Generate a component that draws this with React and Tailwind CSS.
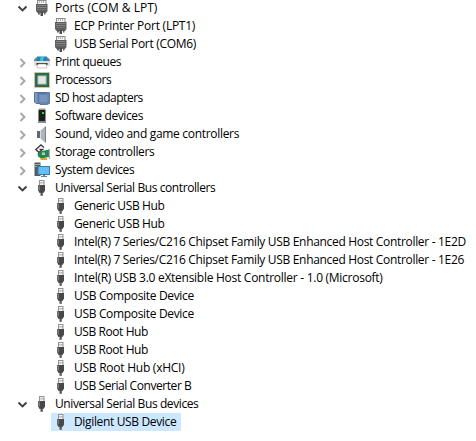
function PortIcon() {
  return (
    <svg className="h-[18px] w-4 shrink-0" viewBox="0 0 16 18">
      <rect x="3.500" y="1.500" width="8.500" height="4" fill="#f4f4f4" stroke="#8c8c8c" />
      <path d="M5.500 2v2M7.500 2v2M9.500 2v2" stroke="#b5b5b5" />
      <path d="M2 5h11.500v7l-1.500 2H3.500L2 12z" fill="#5f5f5f" />
      <path d="M3 6.500h9.500M3 8.500h9.500" stroke="#858585" />
      <path d="M3 10.500h9.500" stroke="#777" />
      <path d="M4 14h2v1.500H4zM10 14h1.500v1.500H10z" fill="#666" />
      <rect x="6.500" y="13" width="2.500" height="4" fill="#4d4d4d" />
    </svg>
  );
}

function UsbIcon() {
  return (
    <svg className="h-[18px] w-4 shrink-0" viewBox="0 0 16 18">
      <rect x="5.500" y="1.500" width="4.500" height="5" fill="#f4f4f4" stroke="#949494" />
      <path d="M7 3v1.500M9 3v1.500" stroke="#777" strokeWidth=".8" />
      <path d="M4.200 6H11v5.500L9.500 14h-4l-1.300-2.500z" fill="#484848" />
      <path d="M5.500 6.500v5" stroke="#787878" />
      <rect x="6.500" y="13" width="2.300" height="3.800" fill="#555" />
    </svg>
  );
}

function PrinterIcon() {
  return (
    <svg className="h-[18px] w-4 shrink-0" viewBox="0 0 16 18">
      <path d="M0 7l2-2.500h12L16 7v2H0z" fill="#7b7b7b" />
      <rect x="3" y="3.500" width="10" height="5" fill="#1c83d6" />
      <path d="M6.500 4h3.500l-1 4H6z" fill="#36cbb5" />
      <path d="M0 8h16v5H0z" fill="#dedede" />
      <path d="M2.500 10h11v2h-11z" fill="#303030" />
      <path d="M4 11h8l1 4H3z" fill="#fff" stroke="#aaa" strokeWidth=".6" />
    </svg>
  );
}

function ChipIcon() {
  return (
    <svg className="h-[18px] w-4 shrink-0" viewBox="0 0 16 18">
      <rect x=".5" y="1.500" width="15" height="15" fill="none" stroke="#a58c3d" strokeDasharray="1 1" />
      <rect x="1" y="2" width="14" height="14" fill="#2a6a50" />
      <rect x="4" y="5" width="8" height="8" fill="#e3e6e3" stroke="#b9c7bb" />
    </svg>
  );
}

function SdIcon() {
  return (
    <svg className="h-[18px] w-4 shrink-0" viewBox="0 0 16 18">
      <path d="M.5 3.500h12v11H2l-1.500-1.500z" fill="#7e9bc0" stroke="#54729b" />
      <path d="M4 4.500l11.500-1v11L13 15.500H6l-2-2z" fill="#6485b4" stroke="#4c6a95" strokeWidth=".8" />
      <path d="M5.500 6h8v7h-8z" fill="#7895bf" />
    </svg>
  );
}

function SoftwareIcon() {
  return (
    <svg className="h-[18px] w-4 shrink-0" viewBox="0 0 16 18">
      <path d="M4 3l1-1.500h6L12 3z" fill="#999" />
      <rect x="4.500" y="3" width="7" height="11.500" fill="#1c1c1c" />
      <rect x="8" y="5" width="2" height="2" fill="#2be432" />
      <path d="M4 14h8v2H4z" fill="#8b8b8b" />
    </svg>
  );
}

function SpeakerIcon() {
  return (
    <svg className="h-[18px] w-4 shrink-0" viewBox="0 0 16 18">
      <rect x="3" y="6" width="3.500" height="7" fill="#62686d" />
      <path d="M6 6l5-4.500v16L6 13z" fill="#adb4ba" />
      <path d="M6.500 6v7" stroke="#d8dcdf" />
      <path d="M11 1.500h1v16h-1z" fill="#7b8186" />
    </svg>
  );
}

function StorageIcon() {
  return (
    <svg className="h-[18px] w-4 shrink-0" viewBox="0 0 16 18">
      <path d="M10 4.500L7 2 1.800 6.500 5 9.500 8.500 6.500H5.500" fill="none" stroke="#3f3f3f" strokeWidth="1.400" />
      <path d="M3.500 10.500L8 8l7-1.500V14l-8 1.500-3-2z" fill="#258557" />
      <path d="M15.300 6v10" stroke="#999" />
      <path d="M8 9.500h3v2.500H8z" fill="#a9d9b4" />
      <path d="M6.500 15H13v2H6.500z" fill="#e2a326" />
    </svg>
  );
}

function SystemIcon() {
  return (
    <svg className="h-[18px] w-4 shrink-0" viewBox="0 0 16 18">
      <rect x=".5" y="1.500" width="6" height="13.500" fill="#565a5d" />
      <path d="M1 3.500h5" stroke="#a3a8ab" />
      <path d="M1 5.500h2" stroke="#49e957" />
      <rect x="4" y="5.500" width="11.500" height="8" fill="#62bff7" stroke="#397ba8" />
      <path d="M9 14h2v1h2v1H7v-1h2z" fill="#548bae" />
    </svg>
  );
}

function Chevron({ open }) {
  return (
    <svg className="mr-1 h-[18px] w-4 shrink-0" viewBox="0 0 16 18" fill="none">
      {open ? (
        <path d="M4.500 7.500l4 4 4-4" stroke="#404040" strokeWidth="1.900" />
      ) : (
        <path d="M6.500 6l4 4-4 4" stroke="#a6a6a6" strokeWidth="1.900" />
      )}
    </svg>
  );
}

const rows = [
  { text: 'Ports (COM & LPT)', Icon: PortIcon, open: true, tracking: 'tracking-[0px]' },
  { text: 'ECP Printer Port (LPT1)', Icon: PortIcon, child: true, tracking: 'tracking-[-0.25px]' },
  { text: 'USB Serial Port (COM6)', Icon: PortIcon, child: true, tracking: 'tracking-[-0.3px]' },
  { text: 'Print queues', Icon: PrinterIcon, tracking: 'tracking-[-0.42px]' },
  { text: 'Processors', Icon: ChipIcon, tracking: 'tracking-[-0.5px]' },
  { text: 'SD host adapters', Icon: SdIcon, tracking: 'tracking-[-0.5px]' },
  { text: 'Software devices', Icon: SoftwareIcon, tracking: 'tracking-[-0.38px]' },
  { text: 'Sound, video and game controllers', Icon: SpeakerIcon, tracking: 'tracking-[-0.31px]' },
  { text: 'Storage controllers', Icon: StorageIcon, tracking: 'tracking-[-0.36px]' },
  { text: 'System devices', Icon: SystemIcon, tracking: 'tracking-[-0.4px]' },
  { text: 'Universal Serial Bus controllers', Icon: UsbIcon, open: true, tracking: 'tracking-[-0.41px]' },
  { text: 'Generic USB Hub', Icon: UsbIcon, child: true, tracking: 'tracking-[-0.38px]' },
  { text: 'Generic USB Hub', Icon: UsbIcon, child: true, tracking: 'tracking-[-0.38px]' },
  { text: 'Intel(R) 7 Series/C216 Chipset Family USB Enhanced Host Controller - 1E2D', Icon: UsbIcon, child: true, tracking: 'tracking-[-0.32px]' },
  { text: 'Intel(R) 7 Series/C216 Chipset Family USB Enhanced Host Controller - 1E26', Icon: UsbIcon, child: true, tracking: 'tracking-[-0.32px]' },
  { text: 'Intel(R) USB 3.0 eXtensible Host Controller - 1.0 (Microsoft)', Icon: UsbIcon, child: true, tracking: 'tracking-[-0.27px]' },
  { text: 'USB Composite Device', Icon: UsbIcon, child: true, tracking: 'tracking-[-0.33px]' },
  { text: 'USB Composite Device', Icon: UsbIcon, child: true, tracking: 'tracking-[-0.33px]' },
  { text: 'USB Root Hub', Icon: UsbIcon, child: true, tracking: 'tracking-[-0.42px]' },
  { text: 'USB Root Hub', Icon: UsbIcon, child: true, tracking: 'tracking-[-0.42px]' },
  { text: 'USB Root Hub (xHCI)', Icon: UsbIcon, child: true, tracking: 'tracking-[-0.25px]' },
  { text: 'USB Serial Converter B', Icon: UsbIcon, child: true, tracking: 'tracking-[-0.43px]' },
  { text: 'Universal Serial Bus devices', Icon: UsbIcon, open: true, tracking: 'tracking-[-0.4px]' },
  { text: 'Digilent USB Device', Icon: UsbIcon, child: true, selected: true, tracking: 'tracking-[-0.35px]' },
];

export default function App() {
  return (
    <main className="h-[441px] w-[476px] overflow-hidden bg-white font-['Open_Sans','Noto_Sans',sans-serif] text-[12px] leading-[18px] text-black">
      <ul className="-mt-px">
        {rows.map(({ text, Icon, open, child, selected, tracking }, i) => (
          <li key={i} className={child ? 'flex h-[18px] pl-[51px]' : 'flex h-[18px] pl-[14px]'}>
            {!child && <Chevron open={open} />}
            <div className={selected ? 'flex w-[130px] bg-[#cce8ff] pl-[2px]' : child ? 'flex pl-[2px]' : 'flex'}>
              <Icon />
              <span className={`ml-[5px] whitespace-nowrap ${tracking}`}>{text}</span>
            </div>
          </li>
        ))}
      </ul>
    </main>
  );
}
